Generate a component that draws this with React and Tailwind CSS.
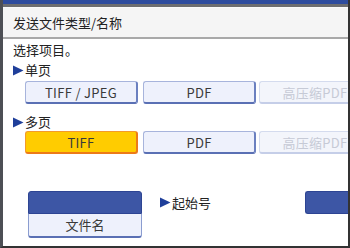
const FONT = "font-['Noto_Sans_CJK_SC','Noto_Sans',sans-serif]";

function Btn({ children, w = "w-[113px]", kind = "normal", className = "" }) {
  const styles = {
    normal:
      "bg-[#eef1fc] border-[#a7b4dc] border-r-[#6b80c0] border-b-[#5a70b4] text-[#3a3a3a]",
    active:
      "bg-[#ffcc00] border-[#f39a2a] border-r-[#ec7a18] border-b-[#ec7a18] text-[#3a3a3a]",
    disabled:
      "bg-[#f3f5fb] border-[#d4dbee] border-r-[#c5cee8] border-b-[#c5cee8] text-[#c6cad6]",
  };
  return (
    <div
      className={`${w} h-[23px] shrink-0 rounded-[3px] border border-r-2 border-b-2 flex items-center justify-center text-[13px] leading-none tracking-[0.3px] ${styles[kind]} ${className}`}
    >
      {children}
    </div>
  );
}

function Arrow() {
  return (
    <svg width="11" height="11" viewBox="0 0 11 11" className="mr-[1px] shrink-0">
      <path d="M0 0.5 L10.5 5.5 L0 10.5 Z" fill="#1f3f9a" />
    </svg>
  );
}

function Label({ children }) {
  return (
    <div className="h-[18px] flex items-center pl-[10px] text-[13px] text-[#222]">
      <Arrow />
      {children}
    </div>
  );
}

export default function App() {
  return (
    <div
      className={`w-[350px] h-[248px] overflow-hidden bg-white relative flex flex-col border-l-[3px] border-l-[#4d4f55] border-r-2 border-r-[#333] border-b-2 border-b-[#333] ${FONT}`}
    >
      {/* top bars */}
      <div className="h-[4px] bg-[#2e4c9e] shrink-0" />
      <div className="h-[3px] bg-[#6e6e70] shrink-0" />
      {/* title */}
      <div className="h-[30px] shrink-0 bg-[#f5f5f5] border-t border-t-[#fafafa] flex items-center pl-[10px] text-[13px] text-[#222]">
        发送文件类型/名称
      </div>
      <div className="h-[2px] bg-[#a9a9a9] shrink-0" />

      <div className="h-[22px] flex items-center pl-[10px] text-[13px] text-[#222]">
        选择项目。
      </div>
      <Label>单页</Label>
      <div className="flex pl-[22px] mt-[2px]">
        <Btn>TIFF / JPEG</Btn>
        <Btn className="ml-[5px]">PDF</Btn>
        <Btn kind="disabled" className="ml-[3px]">高压缩PDF</Btn>
      </div>
      <div className="pt-[9px]">
        <Label>多页</Label>
      </div>
      <div className="flex pl-[22px]">
        <Btn kind="active">TIFF</Btn>
        <Btn className="ml-[5px]">PDF</Btn>
        <Btn kind="disabled" className="ml-[3px]">高压缩PDF</Btn>
      </div>

      <div className="flex items-start pl-[25px] mt-[37px]">
        <div className="w-[114px] shrink-0 flex flex-col">
          <div className="h-[23px] rounded-t-[3px] bg-[#3d56a5] border border-[#2d4493]" />
          <div className="h-[24px] rounded-b-[3px] bg-[#eef1fc] border border-[#8b9dd0] border-b-2 border-b-[#5a70b4] border-t-0 flex items-center justify-center text-[13px] text-[#3a3a3a]">
            文件名
          </div>
        </div>
        <div className="ml-[18px] h-[23px] flex items-center text-[13px] text-[#222]">
          <Arrow />
          起始号
        </div>
        <div className="ml-auto w-[43px] h-[23px] rounded-l-[3px] bg-[#3d56a5] border border-[#2d4493] border-r-0" />
      </div>
    </div>
  );
}
